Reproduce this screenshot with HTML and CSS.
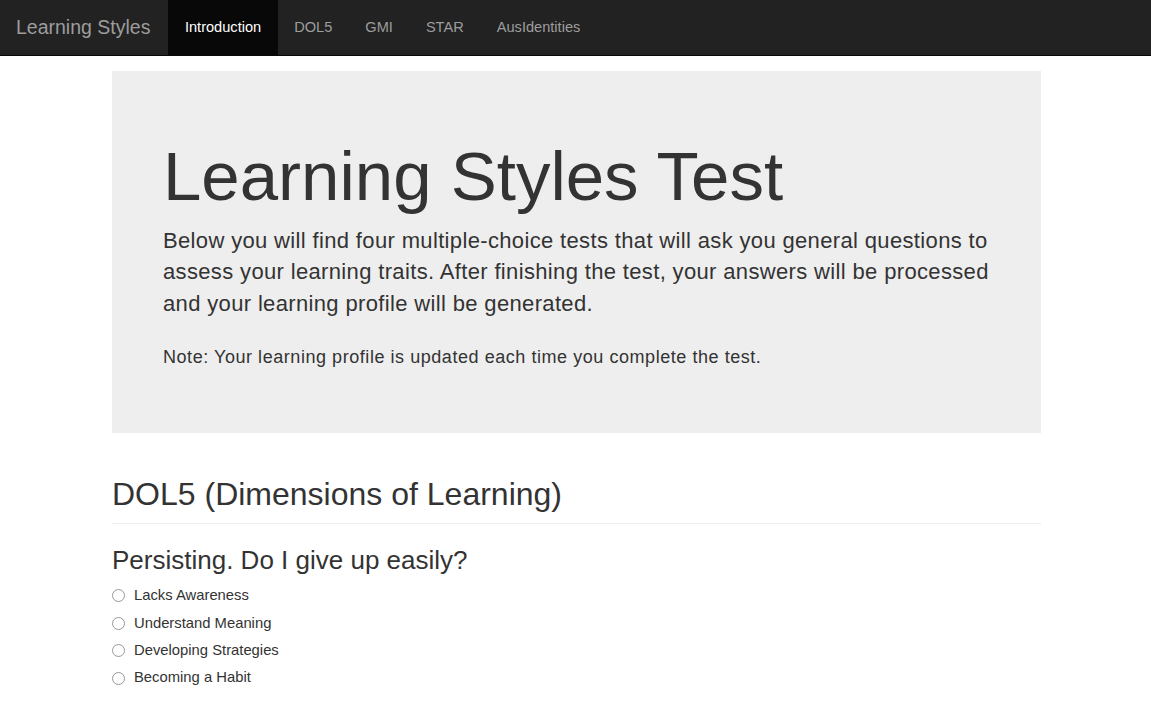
FILE: index.html
```html
<!DOCTYPE html>
<html>
<head>
<meta charset="utf-8">
<title>Learning Styles</title>
<link rel="stylesheet" href="styles.css">
</head>
<body>
<nav class="navbar">
  <a class="brand" href="#">Learning Styles</a>
  <ul class="nav">
    <li class="active"><a href="#">Introduction</a></li>
    <li><a href="#">DOL5</a></li>
    <li><a href="#">GMI</a></li>
    <li><a href="#">STAR</a></li>
    <li><a href="#">AusIdentities</a></li>
  </ul>
</nav>
<main class="container">
  <section class="jumbotron">
    <h1>Learning Styles Test</h1>
    <p class="lead">Below you will find four multiple-choice tests that will ask you general questions to assess your learning traits. After finishing the test, your answers will be processed and your learning profile will be generated.</p>
    <p class="note">Note: Your learning profile is updated each time you complete the test.</p>
  </section>
  <section class="test">
    <h2 class="page-header">DOL5 (Dimensions of Learning)</h2>
    <h3>Persisting. Do I give up easily?</h3>
    <div class="radio"><label><input type="radio" name="q1"> Lacks Awareness</label></div>
    <div class="radio"><label><input type="radio" name="q1"> Understand Meaning</label></div>
    <div class="radio"><label><input type="radio" name="q1"> Developing Strategies</label></div>
    <div class="radio"><label><input type="radio" name="q1"> Becoming a Habit</label></div>
  </section>
</main>
</body>
</html>
```
FILE: styles.css
```css
* { box-sizing: border-box; }
html, body { margin: 0; padding: 0; }
body {
  font-family: "Liberation Sans", Arial, Helvetica, sans-serif;
  font-size: 14px;
  line-height: 1.42857;
  color: #333;
  background: #fff;
}
a { text-decoration: none; }

.navbar {
  display: flex;
  align-items: stretch;
  height: 56px;
  background: #222;
  border-bottom: 1px solid #080808;
}
.brand {
  display: flex;
  align-items: center;
  padding: 0 18px 0 16px;
  font-size: 19.5px;
  color: #9d9d9d;
}
.nav {
  display: flex;
  margin: 0;
  padding: 0;
  list-style: none;
}
.nav li a {
  display: flex;
  align-items: center;
  height: 100%;
  padding: 0 16.5px;
  font-size: 14.6px;
  color: #9d9d9d;
}
.nav li.active a {
  background: #080808;
  color: #fff;
}

.container {
  width: 931px;
  margin: 0 auto;
  padding: 15px 0 0 2px;
}
.jumbotron {
  background: #eee;
  padding: 48px 50px 47px 51px;
  margin-bottom: 30px;
}
.jumbotron h1 {
  margin: 20px 0 0 0;
  font-size: 69px;
  font-weight: 500;
  line-height: 1.1;
  color: #333;
}
.jumbotron .lead {
  margin: 10px 0 24px;
  font-size: 22px;
  letter-spacing: 0.35px;
  line-height: 31.5px;
}
.jumbotron .note {
  margin: 0 0 15px;
  font-size: 18px;
  letter-spacing: 0.55px;
  line-height: 28px;
}

.page-header {
  margin: 44px 0 22px;
  padding-bottom: 10px;
  border-bottom: 1px solid #eee;
  font-size: 32px;
  font-weight: 500;
  line-height: 1.1;
}
.test h3 {
  margin: 0 0 8px;
  font-size: 26px;
  font-weight: 500;
  line-height: 1.1;
}
.radio {
  margin: 0;
  height: 27.4px;
  display: flex;
  align-items: center;
}
.radio label {
  display: flex;
  align-items: center;
  font-size: 14.8px;
  color: #333;
}
.radio input {
  margin: 0 9px 0 0;
  width: 13px;
  height: 13px;
  opacity: 0.75;
}
```
